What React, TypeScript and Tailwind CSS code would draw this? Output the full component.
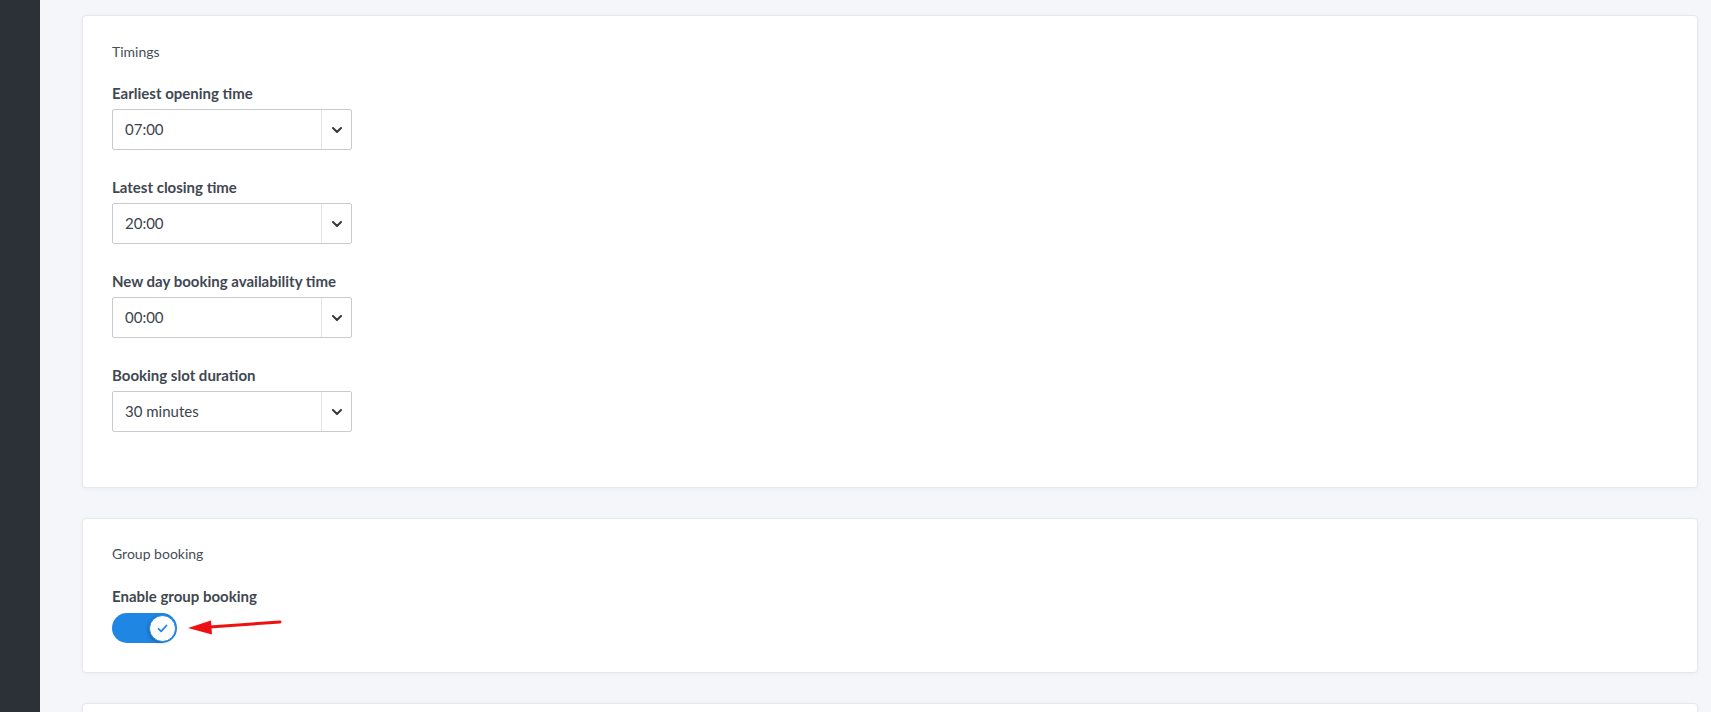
import React from 'react';

const fields = [
  { label: 'Earliest opening time', value: '07:00' },
  { label: 'Latest closing time', value: '20:00' },
  { label: 'New day booking availability time', value: '00:00' },
  { label: 'Booking slot duration', value: '30 minutes' },
];

const Chevron = () => (
  <svg width="10" height="6" viewBox="0 0 10 6" fill="none">
    <path d="M1 1l4 4 4-4" stroke="#333a40" strokeWidth="2" strokeLinecap="round" strokeLinejoin="round" />
  </svg>
);

const SelectBox = ({ value }: { value: string }) => (
  <div className="flex h-[41px] w-[240px] items-stretch rounded-[2px] border border-[#c9cbcf] bg-white">
    <div className="flex flex-1 items-center pl-[12px] text-[15px] text-[#3b444d]">{value}</div>
    <div className="flex w-[30px] items-center justify-center border-l border-[#e3e4e7]">
      <Chevron />
    </div>
  </div>
);

const Card = ({ children, className = '' }: { children: React.ReactNode; className?: string }) => (
  <div
    className={`rounded-[4px] border border-[#e6e8ee] bg-white px-[29px] shadow-[0_1px_4px_rgba(20,30,60,0.04)] ${className}`}
  >
    {children}
  </div>
);

export default function App() {
  return (
    <div className="flex h-[712px] w-full overflow-hidden bg-[#f5f6fa] font-['Lato','Liberation_Sans',sans-serif]">
      {/* Sidebar */}
      <div className="w-[40px] shrink-0 bg-[#2b3136]" />

      {/* Main content */}
      <div className="flex flex-1 flex-col gap-[30px] pl-[42px] pr-[13px] pt-[15px]">
        {/* Timings */}
        <Card className="pt-[28px] pb-[55px]">
          <p className="text-[14px] leading-[16px] text-[#464e57]">Timings</p>
          <div className="mt-[23px] flex flex-col gap-[27px]">
            {fields.map((f) => (
              <div key={f.label}>
                <p className="mb-[6px] text-[15px] font-bold leading-[20px] text-[#3f4852]">{f.label}</p>
                <SelectBox value={f.value} />
              </div>
            ))}
          </div>
        </Card>

        {/* Group booking */}
        <Card className="relative pt-[27px] pb-[29px]">
          <p className="text-[14px] leading-[16px] text-[#464e57]">Group booking</p>
          <p className="mt-[24px] text-[15px] font-bold leading-[20px] text-[#3f4852]">Enable group booking</p>
          <div className="relative mt-[7px] flex items-center">
            <div className="flex h-[30px] w-[65px] items-center justify-end rounded-full bg-[#1f86e3] pr-[1px]">
              <div className="flex h-[27px] w-[27px] items-center justify-center rounded-full border-[1.5px] border-[#1f86e3] bg-white shadow-[-1px_1px_3px_rgba(0,0,0,0.25)]">
                <svg width="11" height="9" viewBox="0 0 11 9" fill="none">
                  <path d="M1.5 4.8l2.7 2.5L9.5 1.5" stroke="#1f86e3" strokeWidth="1.8" strokeLinecap="round" strokeLinejoin="round" />
                </svg>
              </div>
            </div>
            {/* annotation arrow */}
            <svg
              className="absolute left-[74px] top-[0px]"
              width="100"
              height="30"
              viewBox="0 0 100 30"
              fill="none"
            >
              <path d="M20 14.2L94 9" stroke="#ee1111" strokeWidth="3" strokeLinecap="round" />
              <polygon points="2,15 25,7.5 26,21.5" fill="#ee1111" />
            </svg>
          </div>
        </Card>

        {/* Next card (cut off) */}
        <Card className="h-[200px] shrink-0">
          <div />
        </Card>
      </div>
    </div>
  );
}
